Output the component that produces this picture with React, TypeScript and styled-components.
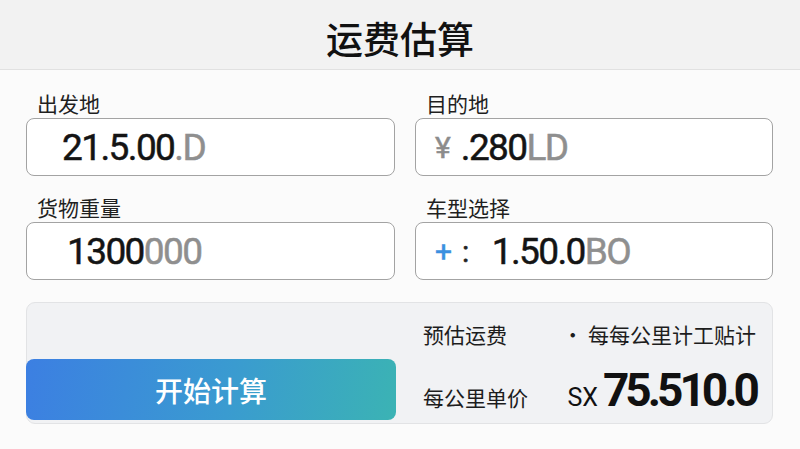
import styled, { createGlobalStyle } from 'styled-components'

const GlobalStyle = createGlobalStyle`
    body {
        margin: 0;
        background: #fbfbfb;
        font-family: "Noto Sans CJK SC", "Noto Sans", sans-serif;
        color: #1b1b1b;
    }
`

const NUM_FONT = `Roboto, "Noto Sans CJK SC", sans-serif`

interface Field {
    label: string;
    prefix?: string;
    prefixColor?: string;
    colon?: boolean;
    value: string;
    faded: string;
    indent: number;
}

const fields: Field[] = [
    { label: "出发地", value: "21.5.00", faded: ".D", indent: 36 },
    { label: "目的地", prefix: "¥", prefixColor: "#8c8c8c", value: ".280", faded: "LD", indent: 20 },
    { label: "货物重量", value: "1300", faded: "000", indent: 41 },
    { label: "车型选择", prefix: "+", prefixColor: "#3b8fe0", colon: true, value: "1.50.0", faded: "BO", indent: 20 },
]

function App() {
    return ( <>
    <GlobalStyle />
    <Page>
        <Header>
            <Title>运费估算</Title>
        </Header>
        <Form>
            {fields.map((f) => (
                <FieldBox key={f.label}>
                    <Label>{f.label}</Label>
                    <InputBox $indent={f.indent}>
                        {f.prefix && <Prefix $color={f.prefixColor}>{f.prefix}</Prefix>}
                        {f.colon && <Colon>:</Colon>}
                        <Value>{f.value}</Value>
                        <Faded>{f.faded}</Faded>
                    </InputBox>
                </FieldBox>
            ))}
        </Form>
        <Panel>
            <ButtonCol>
                <CalcButton>开始计算</CalcButton>
            </ButtonCol>
            <Results>
                <ResultRow>
                    <ResultLabel>预估运费</ResultLabel>
                    <ResultLabel>· 每每公里计工贴计</ResultLabel>
                </ResultRow>
                <ResultRow>
                    <ResultLabel>每公里单价</ResultLabel>
                    <Price><Currency>SX</Currency>75.510.0</Price>
                </ResultRow>
            </Results>
        </Panel>
    </Page>
    </> );
}

const Page = styled.div`
    width: 800px;
    height: 449px;
    overflow: hidden;
`

const Header = styled.div`
    height: 70px;
    background: #f2f2f2;
    border-bottom: 1px solid #e1e1e1;
    display: flex;
    align-items: center;
    justify-content: center;
    box-sizing: border-box;
    padding-top: 6px;
`

const Title = styled.h1`
    margin: 0;
    font-size: 37px;
    font-weight: 500;
    color: #111;
`

const Form = styled.div`
    display: grid;
    grid-template-columns: 369px 358px;
    column-gap: 20px;
    row-gap: 18px;
    padding: 20px 27px 0 26px;
`

const FieldBox = styled.div`
    display: flex;
    flex-direction: column;
    gap: 2px;
`

const Label = styled.div`
    font-size: 21px;
    line-height: 26px;
    padding-left: 11px;
    color: #1f1f1f;
`

const InputBox = styled.div<{ $indent: number }>`
    height: 58px;
    box-sizing: border-box;
    border: 1.5px solid #a3a3a3;
    border-radius: 8px;
    background: #fff;
    display: flex;
    align-items: center;
    padding-left: ${p => p.$indent - 1}px;
    font-family: ${NUM_FONT};
    font-size: 37px;
    font-weight: 400;
    letter-spacing: -1.6px;
    -webkit-text-stroke: 0.5px currentColor;
`

const Prefix = styled.span<{ $color?: string }>`
    color: ${p => p.$color || "#888"};
    font-size: 30px;
    margin-right: 10px;
    letter-spacing: 0;
`

const Colon = styled.span`
    color: #222;
    font-size: 30px;
    margin-right: 24px;
`

const Value = styled.span`
    color: #141414;
`

const Faded = styled.span`
    color: #8f8f8f;
`

const Panel = styled.div`
    margin: 22px 27px 0 26px;
    height: 122px;
    box-sizing: border-box;
    background: #f1f2f4;
    border: 1px solid #e2e3e5;
    border-radius: 9px;
    display: grid;
    grid-template-columns: 369px 1fr;
`

const ButtonCol = styled.div`
    display: flex;
    flex-direction: column;
    justify-content: flex-end;
    padding-bottom: 3px;
    margin-left: -1px;
`

const CalcButton = styled.button`
    height: 61px;
    border: none;
    border-radius: 8px;
    background: linear-gradient(100deg, #3c7fe2 0%, #3a9bd0 55%, #3bb3b4 100%);
    color: #fff;
    font-family: "Noto Sans CJK SC", sans-serif;
    font-size: 28px;
    font-weight: 500;
    cursor: pointer;
`

const Results = styled.div`
    display: flex;
    flex-direction: column;
    justify-content: space-between;
    padding: 16px 16px 0 27px;
`

const ResultRow = styled.div`
    display: flex;
    align-items: baseline;
    justify-content: space-between;
`

const ResultLabel = styled.span`
    font-size: 21px;
    color: #1d1d1d;
`

const Price = styled.span`
    font-family: ${NUM_FONT};
    font-size: 46px;
    line-height: 50px;
    font-weight: 700;
    letter-spacing: -4px;
    color: #111;
`

const Currency = styled.span`
    font-size: 25px;
    font-weight: 400;
    letter-spacing: 0;
    margin-right: 5px;
`

export default App;
